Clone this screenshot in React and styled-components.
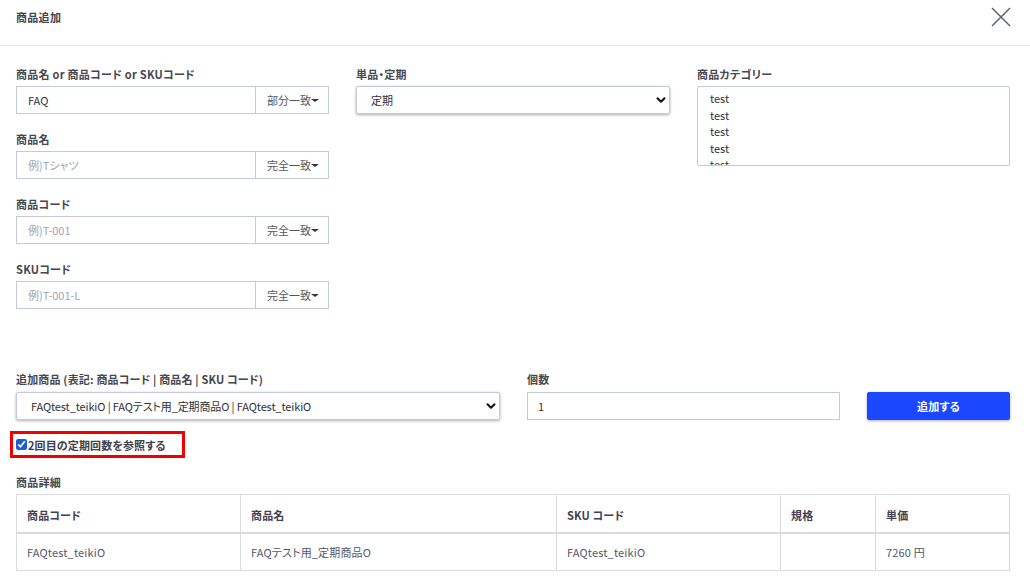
import React from 'react';
import styled, { createGlobalStyle } from 'styled-components';
import { ChevronDown } from 'lucide-react';

const GlobalStyle = createGlobalStyle`
  html, body {
    margin: 0;
    padding: 0;
    background: #fff;
    overflow: hidden;
  }
  * {
    box-sizing: border-box;
  }
  body, input, select, button, table {
    font-family: "Noto Sans CJK JP", "Noto Sans", sans-serif;
    font-feature-settings: "palt";
  }
`;

const Page = styled.div`
  width: 1030px;
  height: 583px;
  overflow: hidden;
  color: #3a3b45;
`;

const Header = styled.header`
  height: 46px;
  padding: 9px 20px 0 16px;
  border-bottom: 1px solid #e4e4e6;
  display: flex;
  justify-content: space-between;
  align-items: flex-start;
`;

const Title = styled.h1`
  margin: 0;
  font-size: 11px;
  line-height: 16px;
  font-weight: 700;
  letter-spacing: 0.3px;
  color: #3f4049;
`;

const CloseButton = styled.button`
  border: 0;
  padding: 0;
  background: none;
  width: 20px;
  height: 20px;
  margin: -2px -1px 0 0;
  color: #5d6078;
`;

const SearchForm = styled.div`
  display: grid;
  grid-template-columns: 313px 314px 313px;
  column-gap: 27px;
  padding: 20px 20px 0 16px;
  height: 325px;
`;

const Column = styled.div`
  display: flex;
  flex-direction: column;
  gap: 17px;
`;

const Field = styled.div`
  display: flex;
  flex-direction: column;
  min-width: 0;
`;

const Label = styled.label`
  display: block;
  height: 20px;
  font-size: 11px;
  line-height: 16px;
  font-weight: 700;
  letter-spacing: 0.27px;
  color: #45464f;
  white-space: nowrap;
`;

const InputGroup = styled.div`
  display: flex;
  height: 28px;
  border: 1px solid #c5c9dd;
  background: #fff;
`;

const TextInput = styled.input`
  flex: 1;
  min-width: 0;
  border: 0;
  outline: 0;
  padding: 0 11px;
  font-size: 11px;
  color: #2e2f36;
  background: transparent;

  &::placeholder {
    color: #a3a4ab;
    opacity: 1;
  }
`;

const MatchButton = styled.button`
  width: 73px;
  flex: none;
  border: 0;
  border-left: 1px solid #c5c9dd;
  background: #fff;
  padding: 0 0 0 2px;
  font-size: 11px;
  color: #55565e;
  display: flex;
  align-items: center;
  justify-content: center;

  &::after {
    content: '';
    border-top: 3px solid #33343a;
    border-left: 4px solid transparent;
    border-right: 4px solid transparent;
    margin-top: 1px;
  }
`;

const SelectWrap = styled.div`
  position: relative;
  height: 28px;
`;

const Select = styled.select`
  appearance: none;
  display: block;
  width: 100%;
  height: 100%;
  border: 1px solid #c5c9dd;
  border-radius: 2px;
  background: #fff;
  box-shadow: 0 1px 3px rgba(70, 75, 110, 0.45);
  outline: 0;
  padding: 0 26px 0 14px;
  font-size: 11px;
  letter-spacing: -0.12px;
  color: #2e2f36;
`;

const SelectArrow = styled(ChevronDown)`
  position: absolute;
  top: 7px;
  right: 2px;
  width: 14px;
  height: 14px;
  color: #111;
  pointer-events: none;
`;

const ListBox = styled.select`
  display: block;
  width: 100%;
  height: 80px;
  border: 1px solid #c5c9dd;
  outline: 0;
  padding: 3px 0 0;
  font-size: 11px;
  color: #2e2f36;
  background: #fff;
  overflow: hidden;
  scrollbar-width: none;

  option {
    min-height: 16.6px;
    line-height: 16.6px;
    padding: 0 12px;
  }
`;

const AddRow = styled.div`
  display: grid;
  grid-template-columns: 484px 313px 143px;
  column-gap: 27px;
  padding: 0 20px 0 16px;
  align-items: end;

  ${Label} {
    height: 21px;
    letter-spacing: 0.17px;
  }
`;

const AddButton = styled.button`
  height: 28px;
  border: 0;
  border-radius: 2px;
  background: #1a47ff;
  box-shadow: 0 1px 3px rgba(70, 75, 110, 0.45);
  color: #fff;
  font-size: 11px;
  font-weight: 700;
  letter-spacing: 0.3px;
`;

const QuantityBox = styled(InputGroup)`
  input {
    padding: 0 10px;
  }
`;

const Highlight = styled.div`
  width: 175px;
  height: 27px;
  margin: 11px 0 0 10px;
  border: 3px solid #f00000;
  display: flex;
  align-items: center;
  padding-left: 3px;
  gap: 1px;
`;

const Check = styled.input`
  width: 11px;
  height: 11px;
  margin: 0;
  accent-color: #1a5fd8;
  flex: none;
`;

const CheckLabel = styled.label`
  font-size: 11px;
  line-height: 16px;
  font-weight: 700;
  letter-spacing: 0.12px;
  color: #3f4049;
  white-space: nowrap;
`;

const DetailSection = styled.section`
  padding: 16px 20px 0 16px;
`;

const DetailTable = styled.table`
  width: 993px;
  table-layout: fixed;
  border-collapse: collapse;
  font-size: 11px;
  letter-spacing: 0.16px;
`;

const HeadCell = styled.th`
  height: 38px;
  padding: 3px 10px 0;
  border: 1px solid #dadbde;
  border-bottom: 2px solid #dadbde;
  text-align: left;
  font-weight: 700;
  color: #3f4256;
`;

const BodyCell = styled.td`
  height: 38px;
  padding: 0 10px;
  border: 1px solid #dadbde;
  color: #53566a;
`;

const columns = [224, 316, 224, 95, 134];

const searchFields = [
  { label: '商品名 or 商品コード or SKUコード', value: 'FAQ', match: '部分一致' },
  { label: '商品名', placeholder: '例)Tシャツ', match: '完全一致' },
  { label: '商品コード', placeholder: '例)T-001', match: '完全一致' },
  { label: 'SKUコード', placeholder: '例)T-001-L', match: '完全一致' },
];

const headers = ['商品コード', '商品名', 'SKU コード', '規格', '単価'];
const row = ['FAQtest_teikiO', 'FAQテスト用_定期商品O', 'FAQtest_teikiO', '', '7260 円'];
const productOption = 'FAQtest_teikiO | FAQテスト用_定期商品O | FAQtest_teikiO';

function CloseIcon() {
  return (
    <svg width="20" height="20" viewBox="0 0 20 20" fill="none" stroke="currentColor" strokeWidth="1.5">
      <path d="M1 1L19 19M19 1L1 19" />
    </svg>
  );
}

export default function App() {
  return (
    <Page>
      <GlobalStyle />
      <Header>
        <Title>商品追加</Title>
        <CloseButton aria-label="閉じる">
          <CloseIcon />
        </CloseButton>
      </Header>

      <SearchForm>
        <Column>
          {searchFields.map((field) => (
            <Field key={field.label}>
              <Label>{field.label}</Label>
              <InputGroup>
                <TextInput defaultValue={field.value} placeholder={field.placeholder} />
                <MatchButton>{field.match}</MatchButton>
              </InputGroup>
            </Field>
          ))}
        </Column>
        <Column>
          <Field>
            <Label>単品・定期</Label>
            <SelectWrap>
              <Select defaultValue="定期">
                <option>定期</option>
                <option>単品</option>
              </Select>
              <SelectArrow strokeWidth={3.5} />
            </SelectWrap>
          </Field>
        </Column>
        <Column>
          <Field>
            <Label>商品カテゴリー</Label>
            <ListBox multiple defaultValue={[]}>
              {[1, 2, 3, 4, 5, 6].map((n) => (
                <option key={n}>test</option>
              ))}
            </ListBox>
          </Field>
        </Column>
      </SearchForm>

      <AddRow>
        <Field>
          <Label>追加商品 (表記: 商品コード | 商品名 | SKU コード)</Label>
          <SelectWrap>
            <Select defaultValue={productOption}>
              <option>{productOption}</option>
            </Select>
            <SelectArrow strokeWidth={3.5} />
          </SelectWrap>
        </Field>
        <Field>
          <Label>個数</Label>
          <QuantityBox>
            <TextInput defaultValue="1" />
          </QuantityBox>
        </Field>
        <AddButton>追加する</AddButton>
      </AddRow>

      <Highlight>
        <Check type="checkbox" id="second-time" defaultChecked />
        <CheckLabel htmlFor="second-time">2回目の定期回数を参照する</CheckLabel>
      </Highlight>

      <DetailSection>
        <Label>商品詳細</Label>
        <DetailTable>
          <colgroup>
            {columns.map((width, i) => (
              <col key={i} width={width} />
            ))}
          </colgroup>
          <thead>
            <tr>
              {headers.map((text) => (
                <HeadCell key={text}>{text}</HeadCell>
              ))}
            </tr>
          </thead>
          <tbody>
            <tr>
              {row.map((text, i) => (
                <BodyCell key={i}>{text}</BodyCell>
              ))}
            </tr>
          </tbody>
        </DetailTable>
      </DetailSection>
    </Page>
  );
}
